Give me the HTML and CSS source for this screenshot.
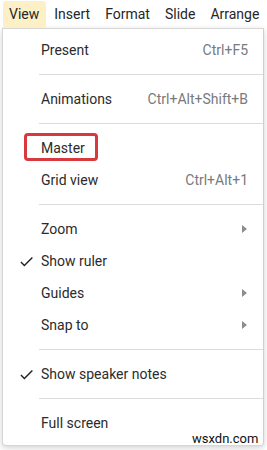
FILE: index.html
```html
<!DOCTYPE html>
<html>
<head>
<meta charset="utf-8">
<link rel="stylesheet" href="styles.css">
</head>
<body>
<div class="page">
  <div class="menubar">
    <span class="mb-item active">View</span>
    <span class="mb-item">Insert</span>
    <span class="mb-item">Format</span>
    <span class="mb-item">Slide</span>
    <span class="mb-item">Arrange</span>
  </div>
  <div class="menu">
    <div class="item"><span class="label">Present</span><span class="sc">Ctrl+F5</span></div>
    <div class="sep"></div>
    <div class="item"><span class="label">Animations</span><span class="sc">Ctrl+Alt+Shift+B</span></div>
    <div class="sep"></div>
    <div class="item highlight"><span class="label">Master</span><span class="redbox"></span></div>
    <div class="item"><span class="label">Grid view</span><span class="sc">Ctrl+Alt+1</span></div>
    <div class="sep"></div>
    <div class="item"><span class="label">Zoom</span><span class="arrow"></span></div>
    <div class="item"><svg class="check" viewBox="0 0 24 24"><path d="M9 16.17L4.83 12l-1.42 1.41L9 19 21 7l-1.41-1.41z"/></svg><span class="label">Show ruler</span></div>
    <div class="item"><span class="label">Guides</span><span class="arrow"></span></div>
    <div class="item"><span class="label">Snap to</span><span class="arrow"></span></div>
    <div class="sep"></div>
    <div class="item"><svg class="check" viewBox="0 0 24 24"><path d="M9 16.17L4.83 12l-1.42 1.41L9 19 21 7l-1.41-1.41z"/></svg><span class="label">Show speaker notes</span></div>
    <div class="sep"></div>
    <div class="item"><span class="label">Full screen</span></div>
  </div>
  <div class="watermark">wsxdn.com</div>
</div>
</body>
</html>
```
FILE: styles.css
```css
html, body {
  margin: 0;
  padding: 0;
  background: #ffffff;
}
body {
  font-family: Roboto, "Liberation Sans", sans-serif;
  font-size: 14px;
  color: #262626;
  width: 267px;
  height: 450px;
  overflow: hidden;
}
.page {
  position: relative;
  width: 267px;
  height: 450px;
}
.menubar {
  display: flex;
  height: 28px;
  padding: 1px 0 0 3px;
  box-sizing: border-box;
}
.mb-item {
  height: 27px;
  line-height: 27px;
  padding: 0 7px 0 6px;
  margin-right: 2px;
  color: #262626;
  border-radius: 3px 3px 0 0;
  white-space: nowrap;
}
.mb-item.active {
  background: #fdefc6;
}
.menu {
  margin-left: 2px;
  width: 262px;
  box-sizing: border-box;
  border: 1px solid #d6d6d6;
  border-right-color: #cfcfcf;
  border-radius: 0 0 4px 4px;
  box-shadow: 0 2px 6px rgba(0, 0, 0, 0.18);
  background: #fff;
  padding: 5px 0 6px;
}
.item {
  position: relative;
  display: flex;
  align-items: center;
  height: 32px;
  padding: 0 15px 0 38px;
}
.label {
  flex: 1;
  color: #2b2b2b;
}
.sc {
  color: #777a7e;
}
.sep {
  height: 1px;
  background: #dadce0;
  margin: 8px 0 8px 36px;
}
.arrow {
  width: 0;
  height: 0;
  border-top: 4px solid transparent;
  border-bottom: 4px solid transparent;
  border-left: 5px solid #8a8d91;
  margin-right: 1px;
}
.check {
  position: absolute;
  left: 15px;
  top: 8px;
  width: 17px;
  height: 17px;
  fill: #202124;
}
.redbox {
  position: absolute;
  left: 21px;
  top: 1px;
  width: 68px;
  height: 22px;
  border: 3px solid #d8393f;
  border-radius: 4px;
}
.watermark {
  position: absolute;
  left: 192px;
  top: 431px;
  font-size: 13px;
  color: #111;
}
```
